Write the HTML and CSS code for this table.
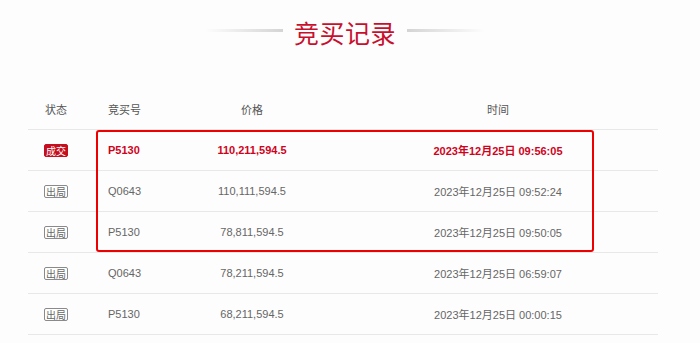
FILE: index.html
```html
<!DOCTYPE html>
<html lang="zh">
<head>
<meta charset="utf-8">
<link rel="stylesheet" href="styles.css">
</head>
<body>
<div class="title">
  <span class="line line-left"></span>
  <h1>竞买记录</h1>
  <span class="line line-right"></span>
</div>
<div class="table">
  <div class="row head">
    <div class="c-status">状态</div>
    <div class="c-id">竞买号</div>
    <div class="c-price">价格</div>
    <div class="c-time">时间</div>
  </div>
  <div class="row win">
    <div class="c-status"><span class="badge badge-win">成交</span></div>
    <div class="c-id">P5130</div>
    <div class="c-price">110,211,594.5</div>
    <div class="c-time">2023年12月25日 09:56:05</div>
  </div>
  <div class="row">
    <div class="c-status"><span class="badge badge-out">出局</span></div>
    <div class="c-id">Q0643</div>
    <div class="c-price">110,111,594.5</div>
    <div class="c-time">2023年12月25日 09:52:24</div>
  </div>
  <div class="row">
    <div class="c-status"><span class="badge badge-out">出局</span></div>
    <div class="c-id">P5130</div>
    <div class="c-price">78,811,594.5</div>
    <div class="c-time">2023年12月25日 09:50:05</div>
  </div>
  <div class="row">
    <div class="c-status"><span class="badge badge-out">出局</span></div>
    <div class="c-id">Q0643</div>
    <div class="c-price">78,211,594.5</div>
    <div class="c-time">2023年12月25日 06:59:07</div>
  </div>
  <div class="row">
    <div class="c-status"><span class="badge badge-out">出局</span></div>
    <div class="c-id">P5130</div>
    <div class="c-price">68,211,594.5</div>
    <div class="c-time">2023年12月25日 00:00:15</div>
  </div>
  <div class="highlight"></div>
</div>
</body>
</html>
```
FILE: styles.css
```css
html, body {
  margin: 0;
  padding: 0;
  background: #fdfdfd;
}
body {
  font-family: "Liberation Sans", "Noto Sans CJK SC", sans-serif;
  color: #666;
  width: 700px;
  height: 343px;
  overflow: hidden;
}
.title {
  display: flex;
  justify-content: center;
  align-items: center;
  gap: 11px;
  padding-top: 17px;
  height: 30px;
  padding-right: 10px;
}
.title h1 {
  margin: 0;
  font-family: "Noto Sans CJK SC", sans-serif;
  font-weight: 400;
  font-size: 25px;
  line-height: 30px;
  color: #c8102e;
  letter-spacing: 0.5px;
}
.line {
  display: block;
  width: 78px;
  height: 3px;
  margin-top: -3px;
}
.line-left {
  background: linear-gradient(to right, rgba(220,220,220,0), #d4d4d4);
}
.line-right {
  background: linear-gradient(to right, #d4d4d4, rgba(220,220,220,0));
}
.table {
  position: relative;
  margin: 41px 0 0 28px;
  width: 630px;
  font-size: 11px;
}
.row {
  display: grid;
  grid-template-columns: 56px 106px 124px 1fr;
  align-items: center;
  height: 40px;
  border-bottom: 1px solid #e8e8e8;
}
.row.head {
  height: 41px;
  color: #555;
}
.c-status {
  text-align: center;
}
.c-id {
  padding-left: 24px;
}
.c-price {
  text-align: center;
}
.c-time {
  text-align: center;
  padding-left: 24px;
}
.row.win {
  color: #d0021b;
  font-weight: 700;
}
.badge {
  display: inline-block;
  font-family: "Noto Sans CJK SC", sans-serif;
  font-size: 10px;
  line-height: 11px;
  padding: 0 1px;
  border-radius: 2px;
  font-weight: 400;
  vertical-align: middle;
}
.badge-win {
  background: #c50f1f;
  color: #fff;
  border: 1px solid #c50f1f;
}
.badge-out {
  border: 1px solid #8a8a8a;
  color: #666;
  background: #fff;
}
.highlight {
  position: absolute;
  left: 68px;
  top: 42px;
  width: 494px;
  height: 118px;
  border: 2px solid #ee0000;
  border-radius: 3px;
  pointer-events: none;
}
```
